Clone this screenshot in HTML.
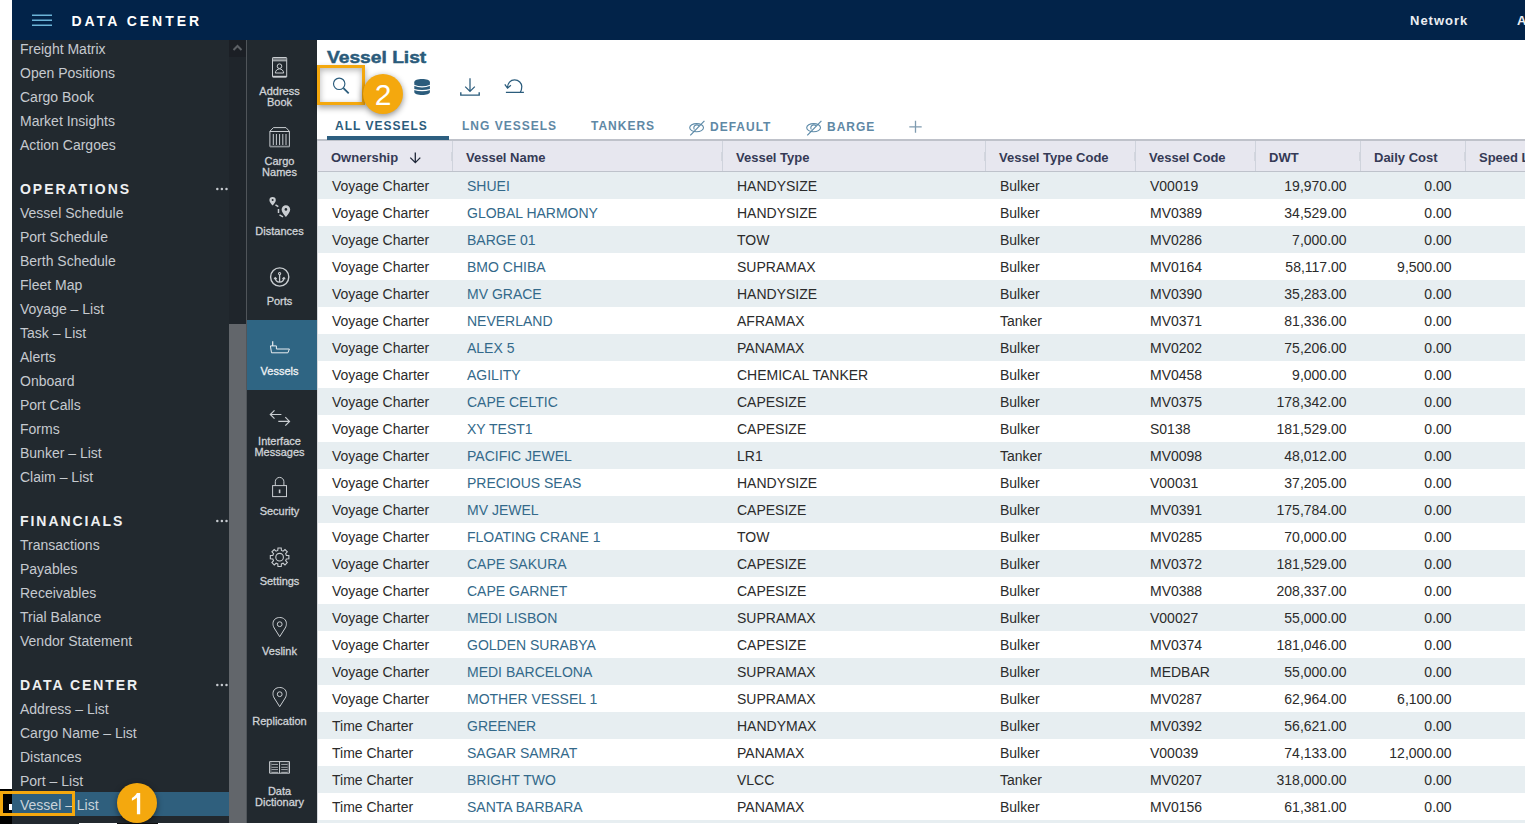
<!DOCTYPE html>
<html><head><meta charset="utf-8">
<style>
*{box-sizing:border-box;margin:0;padding:0}
html,body{width:1525px;height:824px;overflow:hidden;background:#fff;font-family:"Liberation Sans",sans-serif;position:relative}
svg{position:absolute;left:0;top:0;overflow:visible}
#hdr{position:absolute;left:12px;top:0;width:1513px;height:40px;background:#022349}
#title{position:absolute;left:59.5px;top:11px;font-size:14px;font-weight:bold;letter-spacing:3px;color:#fff;line-height:20px;white-space:nowrap}
#net{position:absolute;left:1398px;top:10.5px;font-size:13px;font-weight:bold;letter-spacing:1px;color:#eceef2;line-height:20px}
#acc{position:absolute;left:1505px;top:10.5px;font-size:13px;font-weight:bold;color:#eceef2;line-height:20px}
#side{position:absolute;left:12px;top:40px;width:217px;height:783px;background:#22292f;overflow:hidden}
.mi{position:absolute;left:8px;font-size:14px;line-height:18px;color:#c6cacf;white-space:nowrap}
.mi.sl{color:#c9d3da}
.mh{position:absolute;left:8px;font-size:14px;line-height:18px;font-weight:bold;letter-spacing:1.95px;color:#eef0f2;white-space:nowrap}
.msel{position:absolute;left:0;width:217px;height:24px;background:#2f5f7d}
#sb{position:absolute;left:229px;top:40px;width:17px;height:783px;background:#1f252b}
#sbbtn{position:absolute;left:229px;top:40px;width:17px;height:17px;background:#1b1f25}
#sbthumb{position:absolute;left:229px;top:324px;width:17px;height:499px;background:#62666b}
#sbline{position:absolute;left:246px;top:40px;width:1px;height:783px;background:#50555a}
#icons{position:absolute;left:247px;top:40px;width:70px;height:783px;background:#22292f}
.ic{position:absolute;left:247px;width:70px;height:70px}
.ic.sel{background:#2f6583}
.il{position:absolute;left:244.5px;width:70px;text-align:center;font-size:11px;line-height:10.6px;font-weight:normal;color:#d0d3d7;-webkit-text-stroke:0.3px #d0d3d7}
.il.sl{color:#eef1f4;-webkit-text-stroke:0.3px #eef1f4}
#main{position:absolute;left:317px;top:40px;width:1208px;height:783px;background:#fff;overflow:hidden}
#vl{position:absolute;left:10px;top:8px;font-size:16px;font-weight:bold;color:#2a5b7b;line-height:20px;white-space:nowrap;transform:scaleX(1.2);transform-origin:0 0;-webkit-text-stroke:0.45px #2a5b7b}
.tab{position:absolute;top:78px;font-size:12px;font-weight:bold;letter-spacing:1px;line-height:16px;color:#5f88a5;white-space:nowrap}
.tab.act{color:#2b5c7c}
.tab.lo{top:79px}
#tabline{position:absolute;left:10px;top:96px;width:122px;height:4px;background:#2d5f80}
#grayline{position:absolute;left:0;top:99px;width:1208px;height:2px;background:#bfc2ca}
#thead{position:absolute;left:0;top:101px;width:1208px;height:31px;background:#e7e7ef;border-bottom:1px solid #bec2cb}
.hc{position:absolute;top:0;height:30px;padding-left:14px;font-size:13px;font-weight:bold;line-height:34px;color:#353a55;white-space:nowrap}
.hsep{position:absolute;top:0;width:1px;height:30px;background:#cfd3dc}
.hgrip{position:absolute;top:11px;width:1px;height:9px;background:#d3d6de}
.row{position:absolute;left:0;width:1208px;height:27px}
.c{position:absolute;top:0;height:27px;padding-left:15px;font-size:14px;line-height:28px;color:#2b2b2b;white-space:nowrap}
.c.lnk{color:#33698a}
.c.num{text-align:right;padding-left:0;padding-right:13.4px}
.badge{position:absolute;width:40px;height:40px;border-radius:50%;background:#f4a80e;color:#fff;font-size:30px;line-height:41px;text-align:center;box-shadow:0 2px 6px rgba(0,0,0,.45)}
.obox{position:absolute;border:3px solid #f4a80e}
</style></head><body>
<div id="hdr">
 <div id="title">DATA CENTER</div>
 <div id="net">Network</div>
 <div id="acc">A</div>
</div>
<svg width="1525" height="40"><path d="M32 15.2H52M32 20.2H52M32 25.2H52" stroke="#6cb4d8" stroke-width="1.4"/></svg>
<div id="side">
<div class="mi" style="top:0px">Freight Matrix</div>
<div class="mi" style="top:24px">Open Positions</div>
<div class="mi" style="top:48px">Cargo Book</div>
<div class="mi" style="top:72px">Market Insights</div>
<div class="mi" style="top:96px">Action Cargoes</div>
<div class="mh" style="top:140px">OPERATIONS</div>
<div class="mi" style="top:164px">Vessel Schedule</div>
<div class="mi" style="top:188px">Port Schedule</div>
<div class="mi" style="top:212px">Berth Schedule</div>
<div class="mi" style="top:236px">Fleet Map</div>
<div class="mi" style="top:260px">Voyage – List</div>
<div class="mi" style="top:284px">Task – List</div>
<div class="mi" style="top:308px">Alerts</div>
<div class="mi" style="top:332px">Onboard</div>
<div class="mi" style="top:356px">Port Calls</div>
<div class="mi" style="top:380px">Forms</div>
<div class="mi" style="top:404px">Bunker – List</div>
<div class="mi" style="top:428px">Claim – List</div>
<div class="mh" style="top:472px">FINANCIALS</div>
<div class="mi" style="top:496px">Transactions</div>
<div class="mi" style="top:520px">Payables</div>
<div class="mi" style="top:544px">Receivables</div>
<div class="mi" style="top:568px">Trial Balance</div>
<div class="mi" style="top:592px">Vendor Statement</div>
<div class="mh" style="top:636px">DATA CENTER</div>
<div class="mi" style="top:660px">Address – List</div>
<div class="mi" style="top:684px">Cargo Name – List</div>
<div class="mi" style="top:708px">Distances</div>
<div class="mi" style="top:732px">Port – List</div>
<div class="msel" style="top:752px"></div><div class="mi sl" style="top:756px">Vessel – List</div>
</div>
<div id="sb"></div><div id="sbbtn"><svg width="17" height="17" viewBox="0 0 17 17"><path d="M4.5 10l4-4 4 4" fill="none" stroke="#5c6065" stroke-width="2"/></svg></div><div id="sbthumb"></div><div id="sbline"></div>
<div id="icons"></div>
<div class="ic" style="top:40px"></div><div class="il" style="top:86px">Address<br>Book</div>
<div class="ic" style="top:110px"></div><div class="il" style="top:156px">Cargo<br>Names</div>
<div class="ic" style="top:180px"></div><div class="il" style="top:226px">Distances</div>
<div class="ic" style="top:250px"></div><div class="il" style="top:296px">Ports</div>
<div class="ic sel" style="top:320px"></div><div class="il sl" style="top:366px">Vessels</div>
<div class="ic" style="top:390px"></div><div class="il" style="top:436px">Interface<br>Messages</div>
<div class="ic" style="top:460px"></div><div class="il" style="top:506px">Security</div>
<div class="ic" style="top:530px"></div><div class="il" style="top:576px">Settings</div>
<div class="ic" style="top:600px"></div><div class="il" style="top:646px">Veslink</div>
<div class="ic" style="top:670px"></div><div class="il" style="top:716px">Replication</div>
<div class="ic" style="top:740px"></div><div class="il" style="top:786px">Data<br>Dictionary</div>
<svg id="isvg" width="1525" height="824" viewBox="0 0 1525 824">
<g fill="none" stroke="#c9cdd1" stroke-width="1">
 <rect x="272.5" y="57.5" width="14.2" height="19.6" rx="0.6"/>
 <path d="M273 59.2H286.2" stroke="#7d8287" stroke-width="2.2"/>
 <path d="M272.5 60.8H286.7"/>
 <path d="M272.5 76.5H286.7" stroke-width="1.4"/>
 <circle cx="279.5" cy="66.2" r="2.3"/>
 <path d="M275.3 73C275.5 70.6 277.4 68.9 279.5 68.9S283.5 70.6 283.7 73Z"/>
 <path d="M273.4 127.6H286L289.4 131.3V146.6H269.9V131.3Z"/>
 <path d="M269.9 131.5H289.4"/>
 <path d="M270 146.5H289.4" stroke-width="1.6" stroke="#8a8f94"/>
 <path d="M273.3 134V145M276.4 134V145M279.6 134V145M282.8 134V145M286 134V145"/>
 <path d="M275.5 204.9L278.3 206.7M278.5 209V212.9M279.5 214.9L283 216.8" stroke-width="1.5"/>
 <circle cx="279.7" cy="277" r="9.1" stroke-width="1.4"/>
 <circle cx="279.6" cy="273.6" r="1.1" stroke-width="1.1"/>
 <path d="M279.6 274.8V282.2M275.2 277.8Q275.6 282.2 279.6 282.2Q283.6 282.2 284 277.8" stroke-width="1.3"/>
 <path d="M274 279.3L275.2 277.6L276.8 279" stroke-width="1.1"/>
 <path d="M282.4 279L284 277.6L285.2 279.3" stroke-width="1.1"/>
 <path d="M270.4 345.9H276.4V349H289.4L287.9 352.8H271.5Z" stroke="#e9edf0"/>
 <path d="M272.7 341.3V345.9" stroke="#e9edf0" stroke-width="1.2"/>
 <path d="M281.4 414.5H270.6M274.5 410.3L270.3 414.5L274.5 418.7M278.3 421.4H289.2M285.3 417.2L289.5 421.4L285.3 425.6" stroke-width="1.2"/>
 <rect x="272.6" y="485.6" width="13.9" height="11"/>
 <path d="M275.3 485.5V481.7A4.3 4.3 0 0 1 283.9 481.7V485.5"/>
 <path d="M279.6 489.5V493.2" stroke-width="1.6"/>
 <path d="M277.79 550.44 L277.97 547.94 L281.23 547.94 L281.41 550.44 L283.10 551.14 L284.99 549.50 L287.30 551.81 L285.66 553.70 L286.36 555.39 L288.86 555.57 L288.86 558.83 L286.36 559.01 L285.66 560.70 L287.30 562.59 L284.99 564.90 L283.10 563.26 L281.41 563.96 L281.23 566.46 L277.97 566.46 L277.79 563.96 L276.10 563.26 L274.21 564.90 L271.90 562.59 L273.54 560.70 L272.84 559.01 L270.34 558.83 L270.34 555.57 L272.84 555.39 L273.54 553.70 L271.90 551.81 L274.21 549.50 L276.10 551.14Z" stroke-width="1.1"/>
 <circle cx="279.6" cy="557.2" r="3.8" stroke-width="1.1"/>
 <path d="M279.7 636.7 L274.2 628 C273.2 626.2 273 625 273 623.5 C273 619.8 276 617.5 279.7 617.5 C283.4 617.5 286.4 619.8 286.4 623.5 C286.4 625 286.2 626.2 285.2 628 Z" fill="none"/><circle cx="279.7" cy="624.2" r="2.4" fill="none"/>
 <path d="M279.7 706.7 L274.2 698 C273.2 696.2 273 695 273 693.5 C273 689.8 276 687.5 279.7 687.5 C283.4 687.5 286.4 689.8 286.4 693.5 C286.4 695 286.2 696.2 285.2 698 Z" fill="none"/><circle cx="279.7" cy="694.2" r="2.4" fill="none"/>
 <path d="M269.6 761.6H289.5V773.2H269.6Z M279.55 761.6V773.2" stroke-width="1"/>
 <path d="M270.9 762.3V772.5M288.2 762.3V772.5" stroke-width="0.8" stroke="#8a8f94"/>
 <path d="M271.5 764.4H278M271.5 767.3H278M271.5 769.6H278M271.5 772.3H278M281.2 764.4H287.6M281.2 767.3H287.6M281.2 769.6H287.6M281.2 772.3H287.6" stroke-width="0.8"/>
</g>
<g fill="#c9cdd1">
 <path d="M272.6 205.6C271 203.6 269.4 202 269.4 200.2A3.2 3.2 0 0 1 275.8 200.2C275.8 202 274.2 203.6 272.6 205.6Z"/>
 <path d="M285.9 216.9C283.5 214.1 281.6 212.1 281.6 209.5A4.3 4.3 0 0 1 290.2 209.5C290.2 212.1 288.3 214.1 285.9 216.9Z"/>
</g>
<g fill="#22292f">
 <circle cx="272.6" cy="200.1" r="1"/>
 <circle cx="285.9" cy="209.4" r="1.3"/>
</g>
<g fill="#c6cacf"><circle cx="217.3" cy="189" r="1.25"/><circle cx="221.9" cy="189" r="1.25"/><circle cx="226.5" cy="189" r="1.25"/><circle cx="217.3" cy="521" r="1.25"/><circle cx="221.9" cy="521" r="1.25"/><circle cx="226.5" cy="521" r="1.25"/><circle cx="217.3" cy="685" r="1.25"/><circle cx="221.9" cy="685" r="1.25"/><circle cx="226.5" cy="685" r="1.25"/></g>
</svg>
<div id="main">
 <div id="vl">Vessel List</div>
 <div class="tab act" style="left:18px">ALL VESSELS</div>
 <div class="tab" style="left:145px">LNG VESSELS</div>
 <div class="tab" style="left:274px">TANKERS</div>
 <div class="tab lo" style="left:393px">DEFAULT</div>
 <div class="tab lo" style="left:510px">BARGE</div>
 <div id="grayline"></div>
 <div id="tabline"></div>
 <div id="thead">
<div class="hc" style="left:0px;width:135px">Ownership</div>
<div class="hc" style="left:135px;width:270px">Vessel Name</div>
<div class="hsep" style="left:135px"></div><div class="hgrip" style="left:134px"></div>
<div class="hc" style="left:405px;width:263px">Vessel Type</div>
<div class="hsep" style="left:405px"></div><div class="hgrip" style="left:404px"></div>
<div class="hc" style="left:668px;width:150px">Vessel Type Code</div>
<div class="hsep" style="left:668px"></div><div class="hgrip" style="left:667px"></div>
<div class="hc" style="left:818px;width:120px">Vessel Code</div>
<div class="hsep" style="left:818px"></div><div class="hgrip" style="left:817px"></div>
<div class="hc" style="left:938px;width:105px">DWT</div>
<div class="hsep" style="left:938px"></div><div class="hgrip" style="left:937px"></div>
<div class="hc" style="left:1043px;width:105px">Daily Cost</div>
<div class="hsep" style="left:1043px"></div><div class="hgrip" style="left:1042px"></div>
<div class="hc" style="left:1148px;width:135px">Speed L</div>
<div class="hsep" style="left:1148px"></div><div class="hgrip" style="left:1147px"></div>
 </div>
<div class="row" style="top:132px;background:#e7eef1"><div class="c" style="left:0px;width:135px">Voyage Charter</div><div class="c lnk" style="left:135px;width:270px">SHUEI</div><div class="c" style="left:405px;width:263px">HANDYSIZE</div><div class="c" style="left:668px;width:150px">Bulker</div><div class="c" style="left:818px;width:120px">V00019</div><div class="c num" style="left:938px;width:105px">19,970.00</div><div class="c num" style="left:1043px;width:105px">0.00</div></div>
<div class="row" style="top:159px;background:#ffffff"><div class="c" style="left:0px;width:135px">Voyage Charter</div><div class="c lnk" style="left:135px;width:270px">GLOBAL HARMONY</div><div class="c" style="left:405px;width:263px">HANDYSIZE</div><div class="c" style="left:668px;width:150px">Bulker</div><div class="c" style="left:818px;width:120px">MV0389</div><div class="c num" style="left:938px;width:105px">34,529.00</div><div class="c num" style="left:1043px;width:105px">0.00</div></div>
<div class="row" style="top:186px;background:#e7eef1"><div class="c" style="left:0px;width:135px">Voyage Charter</div><div class="c lnk" style="left:135px;width:270px">BARGE 01</div><div class="c" style="left:405px;width:263px">TOW</div><div class="c" style="left:668px;width:150px">Bulker</div><div class="c" style="left:818px;width:120px">MV0286</div><div class="c num" style="left:938px;width:105px">7,000.00</div><div class="c num" style="left:1043px;width:105px">0.00</div></div>
<div class="row" style="top:213px;background:#ffffff"><div class="c" style="left:0px;width:135px">Voyage Charter</div><div class="c lnk" style="left:135px;width:270px">BMO CHIBA</div><div class="c" style="left:405px;width:263px">SUPRAMAX</div><div class="c" style="left:668px;width:150px">Bulker</div><div class="c" style="left:818px;width:120px">MV0164</div><div class="c num" style="left:938px;width:105px">58,117.00</div><div class="c num" style="left:1043px;width:105px">9,500.00</div></div>
<div class="row" style="top:240px;background:#e7eef1"><div class="c" style="left:0px;width:135px">Voyage Charter</div><div class="c lnk" style="left:135px;width:270px">MV GRACE</div><div class="c" style="left:405px;width:263px">HANDYSIZE</div><div class="c" style="left:668px;width:150px">Bulker</div><div class="c" style="left:818px;width:120px">MV0390</div><div class="c num" style="left:938px;width:105px">35,283.00</div><div class="c num" style="left:1043px;width:105px">0.00</div></div>
<div class="row" style="top:267px;background:#ffffff"><div class="c" style="left:0px;width:135px">Voyage Charter</div><div class="c lnk" style="left:135px;width:270px">NEVERLAND</div><div class="c" style="left:405px;width:263px">AFRAMAX</div><div class="c" style="left:668px;width:150px">Tanker</div><div class="c" style="left:818px;width:120px">MV0371</div><div class="c num" style="left:938px;width:105px">81,336.00</div><div class="c num" style="left:1043px;width:105px">0.00</div></div>
<div class="row" style="top:294px;background:#e7eef1"><div class="c" style="left:0px;width:135px">Voyage Charter</div><div class="c lnk" style="left:135px;width:270px">ALEX 5</div><div class="c" style="left:405px;width:263px">PANAMAX</div><div class="c" style="left:668px;width:150px">Bulker</div><div class="c" style="left:818px;width:120px">MV0202</div><div class="c num" style="left:938px;width:105px">75,206.00</div><div class="c num" style="left:1043px;width:105px">0.00</div></div>
<div class="row" style="top:321px;background:#ffffff"><div class="c" style="left:0px;width:135px">Voyage Charter</div><div class="c lnk" style="left:135px;width:270px">AGILITY</div><div class="c" style="left:405px;width:263px">CHEMICAL TANKER</div><div class="c" style="left:668px;width:150px">Bulker</div><div class="c" style="left:818px;width:120px">MV0458</div><div class="c num" style="left:938px;width:105px">9,000.00</div><div class="c num" style="left:1043px;width:105px">0.00</div></div>
<div class="row" style="top:348px;background:#e7eef1"><div class="c" style="left:0px;width:135px">Voyage Charter</div><div class="c lnk" style="left:135px;width:270px">CAPE CELTIC</div><div class="c" style="left:405px;width:263px">CAPESIZE</div><div class="c" style="left:668px;width:150px">Bulker</div><div class="c" style="left:818px;width:120px">MV0375</div><div class="c num" style="left:938px;width:105px">178,342.00</div><div class="c num" style="left:1043px;width:105px">0.00</div></div>
<div class="row" style="top:375px;background:#ffffff"><div class="c" style="left:0px;width:135px">Voyage Charter</div><div class="c lnk" style="left:135px;width:270px">XY TEST1</div><div class="c" style="left:405px;width:263px">CAPESIZE</div><div class="c" style="left:668px;width:150px">Bulker</div><div class="c" style="left:818px;width:120px">S0138</div><div class="c num" style="left:938px;width:105px">181,529.00</div><div class="c num" style="left:1043px;width:105px">0.00</div></div>
<div class="row" style="top:402px;background:#e7eef1"><div class="c" style="left:0px;width:135px">Voyage Charter</div><div class="c lnk" style="left:135px;width:270px">PACIFIC JEWEL</div><div class="c" style="left:405px;width:263px">LR1</div><div class="c" style="left:668px;width:150px">Tanker</div><div class="c" style="left:818px;width:120px">MV0098</div><div class="c num" style="left:938px;width:105px">48,012.00</div><div class="c num" style="left:1043px;width:105px">0.00</div></div>
<div class="row" style="top:429px;background:#ffffff"><div class="c" style="left:0px;width:135px">Voyage Charter</div><div class="c lnk" style="left:135px;width:270px">PRECIOUS SEAS</div><div class="c" style="left:405px;width:263px">HANDYSIZE</div><div class="c" style="left:668px;width:150px">Bulker</div><div class="c" style="left:818px;width:120px">V00031</div><div class="c num" style="left:938px;width:105px">37,205.00</div><div class="c num" style="left:1043px;width:105px">0.00</div></div>
<div class="row" style="top:456px;background:#e7eef1"><div class="c" style="left:0px;width:135px">Voyage Charter</div><div class="c lnk" style="left:135px;width:270px">MV JEWEL</div><div class="c" style="left:405px;width:263px">CAPESIZE</div><div class="c" style="left:668px;width:150px">Bulker</div><div class="c" style="left:818px;width:120px">MV0391</div><div class="c num" style="left:938px;width:105px">175,784.00</div><div class="c num" style="left:1043px;width:105px">0.00</div></div>
<div class="row" style="top:483px;background:#ffffff"><div class="c" style="left:0px;width:135px">Voyage Charter</div><div class="c lnk" style="left:135px;width:270px">FLOATING CRANE 1</div><div class="c" style="left:405px;width:263px">TOW</div><div class="c" style="left:668px;width:150px">Bulker</div><div class="c" style="left:818px;width:120px">MV0285</div><div class="c num" style="left:938px;width:105px">70,000.00</div><div class="c num" style="left:1043px;width:105px">0.00</div></div>
<div class="row" style="top:510px;background:#e7eef1"><div class="c" style="left:0px;width:135px">Voyage Charter</div><div class="c lnk" style="left:135px;width:270px">CAPE SAKURA</div><div class="c" style="left:405px;width:263px">CAPESIZE</div><div class="c" style="left:668px;width:150px">Bulker</div><div class="c" style="left:818px;width:120px">MV0372</div><div class="c num" style="left:938px;width:105px">181,529.00</div><div class="c num" style="left:1043px;width:105px">0.00</div></div>
<div class="row" style="top:537px;background:#ffffff"><div class="c" style="left:0px;width:135px">Voyage Charter</div><div class="c lnk" style="left:135px;width:270px">CAPE GARNET</div><div class="c" style="left:405px;width:263px">CAPESIZE</div><div class="c" style="left:668px;width:150px">Bulker</div><div class="c" style="left:818px;width:120px">MV0388</div><div class="c num" style="left:938px;width:105px">208,337.00</div><div class="c num" style="left:1043px;width:105px">0.00</div></div>
<div class="row" style="top:564px;background:#e7eef1"><div class="c" style="left:0px;width:135px">Voyage Charter</div><div class="c lnk" style="left:135px;width:270px">MEDI LISBON</div><div class="c" style="left:405px;width:263px">SUPRAMAX</div><div class="c" style="left:668px;width:150px">Bulker</div><div class="c" style="left:818px;width:120px">V00027</div><div class="c num" style="left:938px;width:105px">55,000.00</div><div class="c num" style="left:1043px;width:105px">0.00</div></div>
<div class="row" style="top:591px;background:#ffffff"><div class="c" style="left:0px;width:135px">Voyage Charter</div><div class="c lnk" style="left:135px;width:270px">GOLDEN SURABYA</div><div class="c" style="left:405px;width:263px">CAPESIZE</div><div class="c" style="left:668px;width:150px">Bulker</div><div class="c" style="left:818px;width:120px">MV0374</div><div class="c num" style="left:938px;width:105px">181,046.00</div><div class="c num" style="left:1043px;width:105px">0.00</div></div>
<div class="row" style="top:618px;background:#e7eef1"><div class="c" style="left:0px;width:135px">Voyage Charter</div><div class="c lnk" style="left:135px;width:270px">MEDI BARCELONA</div><div class="c" style="left:405px;width:263px">SUPRAMAX</div><div class="c" style="left:668px;width:150px">Bulker</div><div class="c" style="left:818px;width:120px">MEDBAR</div><div class="c num" style="left:938px;width:105px">55,000.00</div><div class="c num" style="left:1043px;width:105px">0.00</div></div>
<div class="row" style="top:645px;background:#ffffff"><div class="c" style="left:0px;width:135px">Voyage Charter</div><div class="c lnk" style="left:135px;width:270px">MOTHER VESSEL 1</div><div class="c" style="left:405px;width:263px">SUPRAMAX</div><div class="c" style="left:668px;width:150px">Bulker</div><div class="c" style="left:818px;width:120px">MV0287</div><div class="c num" style="left:938px;width:105px">62,964.00</div><div class="c num" style="left:1043px;width:105px">6,100.00</div></div>
<div class="row" style="top:672px;background:#e7eef1"><div class="c" style="left:0px;width:135px">Time Charter</div><div class="c lnk" style="left:135px;width:270px">GREENER</div><div class="c" style="left:405px;width:263px">HANDYMAX</div><div class="c" style="left:668px;width:150px">Bulker</div><div class="c" style="left:818px;width:120px">MV0392</div><div class="c num" style="left:938px;width:105px">56,621.00</div><div class="c num" style="left:1043px;width:105px">0.00</div></div>
<div class="row" style="top:699px;background:#ffffff"><div class="c" style="left:0px;width:135px">Time Charter</div><div class="c lnk" style="left:135px;width:270px">SAGAR SAMRAT</div><div class="c" style="left:405px;width:263px">PANAMAX</div><div class="c" style="left:668px;width:150px">Bulker</div><div class="c" style="left:818px;width:120px">V00039</div><div class="c num" style="left:938px;width:105px">74,133.00</div><div class="c num" style="left:1043px;width:105px">12,000.00</div></div>
<div class="row" style="top:726px;background:#e7eef1"><div class="c" style="left:0px;width:135px">Time Charter</div><div class="c lnk" style="left:135px;width:270px">BRIGHT TWO</div><div class="c" style="left:405px;width:263px">VLCC</div><div class="c" style="left:668px;width:150px">Tanker</div><div class="c" style="left:818px;width:120px">MV0207</div><div class="c num" style="left:938px;width:105px">318,000.00</div><div class="c num" style="left:1043px;width:105px">0.00</div></div>
<div class="row" style="top:753px;background:#ffffff"><div class="c" style="left:0px;width:135px">Time Charter</div><div class="c lnk" style="left:135px;width:270px">SANTA BARBARA</div><div class="c" style="left:405px;width:263px">PANAMAX</div><div class="c" style="left:668px;width:150px">Bulker</div><div class="c" style="left:818px;width:120px">MV0156</div><div class="c num" style="left:938px;width:105px">61,381.00</div><div class="c num" style="left:1043px;width:105px">0.00</div></div>
<div class="row" style="top:780px;background:#e7eef1"><div class="c" style="left:0px;width:135px"></div><div class="c lnk" style="left:135px;width:270px"></div><div class="c" style="left:405px;width:263px"></div><div class="c" style="left:668px;width:150px"></div><div class="c" style="left:818px;width:120px"></div><div class="c num" style="left:938px;width:105px"></div><div class="c num" style="left:1043px;width:105px"></div></div>
</div>
<div style="position:absolute;left:317px;top:141px;width:1px;height:682px;background:#d6d9dd"></div>
<svg id="tsvg" width="1525" height="824" viewBox="0 0 1525 824">
<g fill="none" stroke="#2b5c7c">
 <circle cx="339.2" cy="83.8" r="5.7" stroke-width="1.15"/>
 <path d="M343.4 88.1L348.7 93.4" stroke-width="1.8"/>
 <path d="M470 78.2V91.3M465.2 86.6L470 91.4L474.8 86.6" stroke-width="1.25"/><path d="M460.8 92.2V95.1H479.2V92.2" stroke-width="1.4"/>
 <path d="M507.6 87.8C507.4 83 510.5 79.9 514.6 79.9C518.8 79.9 521.8 83.2 521.8 86.6C521.8 89 521.2 91 520.2 92.4M504.8 84.3L507.5 88.2L510.9 85.3M505.9 92.4H523.9" stroke-width="1.25"/>
</g>
<path d="M414.3 82.2C414.3 80.2 417.8 79 422.1 79S429.9 80.2 429.9 82.2V92C429.9 93.9 426.4 95 422.1 95S414.3 93.9 414.3 92Z" fill="#2b5c7c"/>
<path d="M414 85.3Q422 88.4 430.2 85.3M414 89.5Q422 91.8 430.2 89.5" fill="none" stroke="#fff" stroke-width="1.1"/>
<g fill="none" stroke="#5d8aa8" stroke-width="1.1">
 <ellipse cx="696.6" cy="127.7" rx="6.9" ry="4.1"/>
 <path d="M694.4 129.5A2.6 2.6 0 1 1 699 126" />
 <path d="M690.3 135.4L704.4 120.9" stroke-width="1.2"/>
 <ellipse cx="813.6" cy="127.7" rx="6.9" ry="4.1"/>
 <path d="M811.4 129.5A2.6 2.6 0 1 1 816 126" />
 <path d="M807.3 135.4L821.4 120.9" stroke-width="1.2"/>
 <path d="M915.5 120.8V132.8M909.3 126.8H921.7" stroke="#7f9bb0" stroke-width="1.3"/>
</g>
<path d="M415.3 152.4V162.6M410.3 157.6L415.3 162.6L420.3 157.6" fill="none" stroke="#1f2738" stroke-width="1.3"/>
</svg>
<div class="obox" style="left:317px;top:65px;width:48px;height:40px;box-shadow:0 3px 6px rgba(0,0,0,.35), inset 0 2px 6px rgba(0,0,0,.3)"></div>
<div class="badge" style="left:363px;top:74px">2</div>
<div style="position:absolute;left:0;top:789px;width:12px;height:35px;background:#000"></div><div style="position:absolute;left:12px;top:823px;width:67px;height:1px;background:#22292f"></div>
<div style="position:absolute;left:9px;top:804px;width:3px;height:6px;background:#fff"></div>
<div class="obox" style="left:0;top:791px;width:75px;height:25px"></div>
<div style="position:absolute;left:117px;top:823px;width:41px;height:1px;background:#111"></div><div class="badge" style="left:117px;top:783px"></div><svg width="1525" height="824"><path d="M136.9 793H140.2V814.2H136.9V797.6C135.6 799 133.6 800.1 131.9 800.8V797.9C134.1 797 135.9 795 136.9 793Z" fill="#fff"/></svg>
</body></html>
